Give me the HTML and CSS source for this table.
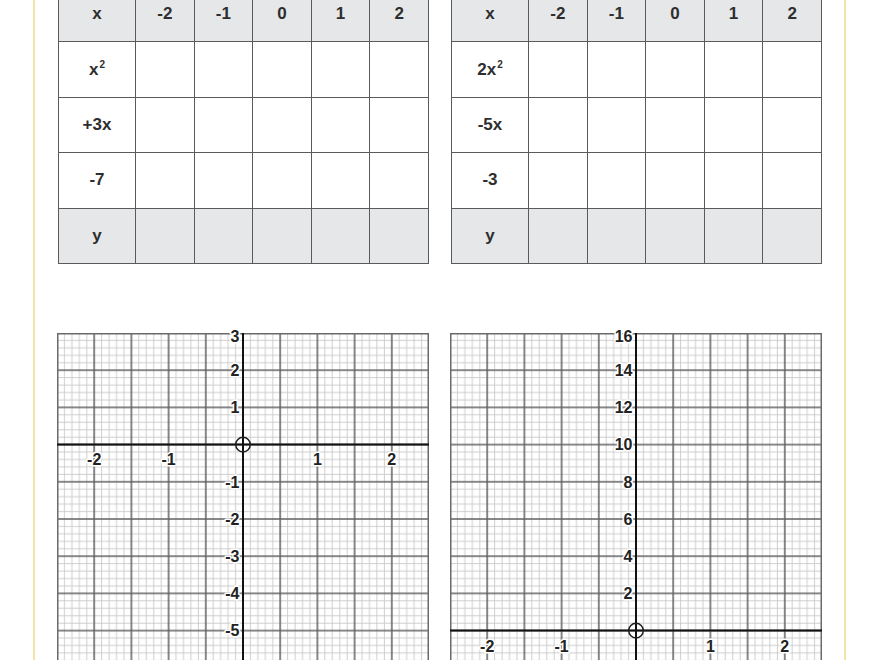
FILE: index.html
```html
<!DOCTYPE html>
<html lang="en">
<head>
<meta charset="utf-8">
<title>Quadratic tables and graphs</title>
<link rel="stylesheet" href="styles.css">
</head>
<body>
<div class="sheet">
  <div class="pair">
    <table class="values">
      <colgroup><col class="first"><col><col><col><col><col></colgroup>
      <tr class="head"><th>x</th><th>-2</th><th>-1</th><th>0</th><th>1</th><th>2</th></tr>
      <tr><th>x<sup>2</sup></th><td></td><td></td><td></td><td></td><td></td></tr>
      <tr><th>+3x</th><td></td><td></td><td></td><td></td><td></td></tr>
      <tr><th>-7</th><td></td><td></td><td></td><td></td><td></td></tr>
      <tr class="total"><th>y</th><td></td><td></td><td></td><td></td><td></td></tr>
    </table>
    <table class="values">
      <colgroup><col class="first"><col><col><col><col><col></colgroup>
      <tr class="head"><th>x</th><th>-2</th><th>-1</th><th>0</th><th>1</th><th>2</th></tr>
      <tr><th>2x<sup>2</sup></th><td></td><td></td><td></td><td></td><td></td></tr>
      <tr><th>-5x</th><td></td><td></td><td></td><td></td><td></td></tr>
      <tr><th>-3</th><td></td><td></td><td></td><td></td><td></td></tr>
      <tr class="total"><th>y</th><td></td><td></td><td></td><td></td><td></td></tr>
    </table>
  </div>

  <div class="pair graphs">
    <svg class="graph" width="372" height="372" viewBox="0 0 372 372">
      <defs>
        <pattern id="grid" width="37.2" height="37.2" patternUnits="userSpaceOnUse">
          <path class="minor" d="M7.44 0V37.2M14.88 0V37.2M22.32 0V37.2M29.76 0V37.2M0 7.44H37.2M0 14.88H37.2M0 22.32H37.2M0 29.76H37.2"/>
          <path class="major" d="M0 0V37.2M37.2 0V37.2M0 0H37.2M0 37.2H37.2"/>
        </pattern>
      </defs>
      <rect width="372" height="372" fill="url(#grid)"/>
      <rect class="frame" x="0.75" y="0.75" width="370.5" height="370.5"/>
      <line class="axis" x1="0" y1="111.6" x2="372" y2="111.6"/>
      <line class="axis" x1="186" y1="0" x2="186" y2="372"/>
      <circle class="origin" cx="186" cy="111.6" r="7.3"/>
      <g class="lbl y">
        <text x="182.5" y="8.8">3</text>
        <text x="182.5" y="42.9">2</text>
        <text x="182.5" y="80.1">1</text>
        <text x="182.5" y="154.5">-1</text>
        <text x="182.5" y="191.7">-2</text>
        <text x="182.5" y="228.9">-3</text>
        <text x="182.5" y="266.1">-4</text>
        <text x="182.5" y="303.3">-5</text>
      </g>
      <g class="lbl x">
        <text x="37.2" y="132.2">-2</text>
        <text x="111.6" y="132.2">-1</text>
        <text x="260.4" y="132.2">1</text>
        <text x="334.8" y="132.2">2</text>
      </g>
    </svg>

    <svg class="graph" width="372" height="372" viewBox="0 0 372 372">
      <rect width="372" height="372" fill="url(#grid)"/>
      <rect class="frame" x="0.75" y="0.75" width="370.5" height="370.5"/>
      <line class="axis" x1="0" y1="297.6" x2="372" y2="297.6"/>
      <line class="axis" x1="186" y1="0" x2="186" y2="372"/>
      <circle class="origin" cx="186" cy="297.6" r="7.3"/>
      <g class="lbl y">
        <text x="182.5" y="9.3">16</text>
        <text x="182.5" y="42.9">14</text>
        <text x="182.5" y="80.1">12</text>
        <text x="182.5" y="117.3">10</text>
        <text x="182.5" y="154.5">8</text>
        <text x="182.5" y="191.7">6</text>
        <text x="182.5" y="228.9">4</text>
        <text x="182.5" y="266.1">2</text>
      </g>
      <g class="lbl x">
        <text x="37.2" y="319.2">-2</text>
        <text x="111.6" y="319.2">-1</text>
        <text x="260.4" y="319.2">1</text>
        <text x="334.8" y="319.2">2</text>
      </g>
    </svg>
  </div>
</div>
</body>
</html>
```

FILE: styles.css
```css
html, body {
  margin: 0;
  padding: 0;
  background: #ffffff;
  overflow: hidden;
}

body {
  font-family: "Liberation Sans", Arial, sans-serif;
  color: #333333;
}

.sheet {
  box-sizing: border-box;
  width: 813px;
  min-height: 760px;
  margin: -14px 0 0 33px;
  padding: 0 22px 0 23px;
  border-left: 2px solid #f5e3a6;
  border-right: 2px solid #f5e3a6;
  display: flex;
  flex-direction: column;
}

.pair {
  display: grid;
  grid-template-columns: 371px 371px;
  column-gap: 22px;
}

.graphs {
  margin-top: 69px;
}

.values {
  width: 371px;
  table-layout: fixed;
  border-collapse: collapse;
  border: 1px solid #5a5a5a;
}

.values col.first {
  width: 77px;
}

.values th,
.values td {
  border: 1px solid #5a5a5a;
  height: 54.4px;
  padding: 0;
  text-align: center;
  vertical-align: middle;
  font-size: 17px;
  font-weight: bold;
  color: #2e2e2e;
  background: #ffffff;
}

.values .head th,
.values .total th,
.values .total td {
  background: #e6e7e9;
}

.values sup {
  font-size: 10px;
  line-height: 0;
  vertical-align: 7px;
  margin-left: 1px;
}

.graph {
  display: block;
  margin-left: -1px;
  overflow: visible;
}

.graph .minor {
  fill: none;
  stroke: #c9c9c9;
  stroke-width: 0.9;
}

.graph .major {
  fill: none;
  stroke: #606060;
  stroke-width: 1.5;
}

.graph .frame {
  fill: none;
  stroke: #6a6a6a;
  stroke-width: 1.5;
}

.graph .axis {
  stroke: #111111;
  stroke-width: 2;
}

.graph .origin {
  fill: none;
  stroke: #1e1e1e;
  stroke-width: 1.5;
}

.lbl text {
  font-family: "Liberation Sans", Arial, sans-serif;
  font-weight: bold;
  font-size: 16px;
  fill: #222222;
  stroke: #ffffff;
  stroke-width: 3;
  stroke-linejoin: round;
  paint-order: stroke;
}

.lbl.y text {
  text-anchor: end;
}

.lbl.x text {
  text-anchor: middle;
}
```
